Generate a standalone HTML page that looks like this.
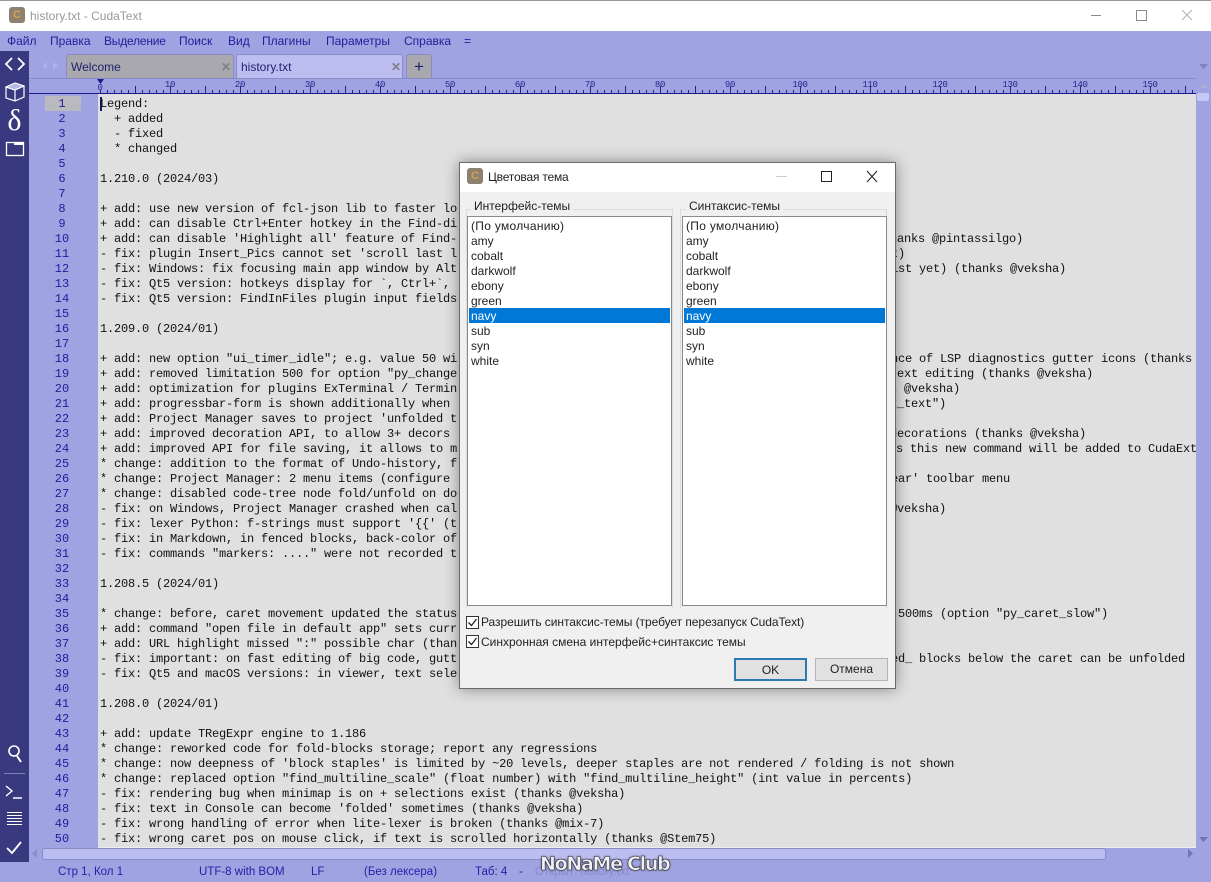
<!DOCTYPE html>
<html><head><meta charset="utf-8"><title>history.txt - CudaText</title>
<style>
html,body{margin:0;padding:0;width:1211px;height:882px;overflow:hidden;background:#a0a3e1}
*{box-sizing:border-box}
body{position:relative;font-family:"Liberation Sans","Noto Sans CJK SC",sans-serif;font-size:12px}
.a{position:absolute}
#title{left:0;top:0;width:1211px;height:31px;background:#fff;border-top:1px solid #999}
#menu span{position:absolute;top:34px;color:#20209a;font-size:12px;line-height:14px;white-space:nowrap}
#side{left:0;top:51px;width:29px;height:811px;background:#39397f}
.tab{position:absolute;top:54px;height:25px;border:1px solid #8c8cc4;border-bottom:0;border-radius:3px 3px 0 0;font-size:12px;line-height:25px;padding-left:4px;color:#22226c}
#ed{left:98px;top:94px;width:1098px;height:753px;background:#e0e0e0}
.n{position:absolute;left:27px;width:70px;text-align:center;font:12px/15px "Liberation Mono",monospace;color:#20209a}
#code{left:0;top:1px;width:1196px;height:846px;overflow:hidden}
#code div,#code span{position:absolute;font:12px/15px "Liberation Mono",monospace;letter-spacing:-.2px;color:#111;white-space:pre}
.r{position:absolute;top:80px;font:9px/10px "Liberation Mono",monospace;color:#24248c;letter-spacing:-.3px;transform:translateX(-50%)}
#dlg{left:459px;top:162px;width:437px;height:527px;background:#f0f0f0;border:1px solid #6a6a6a;box-shadow:0 0 14px rgba(0,0,0,.4)}
.d{position:absolute;white-space:nowrap;font-size:12px;line-height:15px;color:#222}
.list{position:absolute;top:216px;height:390px;background:#fff;border:1px solid #8a8a8a}
.grp{position:absolute;top:209px;height:400px;border:1px solid #dcdcdc;border-bottom:0}
.sel{position:absolute;top:308px;height:15px;background:#0078d7}
.cb{position:absolute;left:466px;width:13px;height:13px;border:1px solid #333;background:#fff}
.btn{position:absolute;top:658px;height:23px;background:#e1e1e1;text-align:center;font-size:12px;line-height:22px;color:#222}
#st span{position:absolute;top:865px;font-size:11.500px;line-height:14px;color:#2222a8;white-space:nowrap}
</style></head><body>

<div class="a" id="title"></div>
<div class="a" style="left:9px;top:7px;width:16px;height:16px;border-radius:3px;background:#8d8272;color:#d8a24a;font:bold 11px/16px 'Liberation Sans',sans-serif;text-align:center">C</div>
<div class="a" style="left:30px;top:9px;font-size:12px;line-height:14px;color:#9a9a9a">history.txt - CudaText</div>
<svg class="a" style="left:1080px;top:5px" width="125" height="22" fill="none" stroke="#8a8a8a" stroke-width="1"><line x1="11" y1="10.500" x2="21" y2="10.500"/><rect x="56.500" y="5.500" width="10" height="10"/><path d="M102 5l10 10M112 5l-10 10" stroke="#b0b0b0"/></svg>

<div id="menu">
<span style="left:7px">Файл</span><span style="left:50px">Правка</span><span style="left:104px;letter-spacing:-.2px">Выделение</span><span style="left:179px">Поиск</span><span style="left:228px">Вид</span><span style="left:262px">Плагины</span><span style="left:326px">Параметры</span><span style="left:404px">Справка</span><span style="left:464px">=</span>
</div>

<div class="a" id="side"></div>
<svg class="a" style="left:0;top:51px" width="29" height="811" fill="none" stroke="#fff" stroke-width="1.500">
<path d="M12 7l-6 6 6 6M18 7l6 6-6 6" stroke-width="1.800"/>
<path d="M6 36l9-4 9 3v11l-9 4-9-3zM6 36l9 3 9-4M15 39v11" stroke-width="1.200"/>
<path d="M6 36l9-4 9 3-9 4z" fill="#b8b8e8" stroke-width="1"/>
<rect x="6.500" y="91.500" width="17" height="13" stroke-width="1.300"/><rect x="14" y="91" width="10" height="3" fill="#fff" stroke="none"/>
<circle cx="14" cy="700" r="5" stroke-width="1.600"/><line x1="17" y1="705" x2="21" y2="711" stroke-width="2"/>
<line x1="4" y1="722.500" x2="25" y2="722.500" stroke="#8080b8" stroke-width="1"/>
<path d="M6 735l6 5-6 5M13 747h9" stroke-width="1.400"/>
<path d="M7 761.500h15M7 764.500h15M7 767.500h15M7 770.500h15M7 773.500h15" stroke-width="1"/>
<path d="M7 797l5 5 9-11" stroke-width="1.800"/>
</svg>
<div class="a" style="left:0;top:104px;width:29px;text-align:center;color:#fff;font:30px/34px 'Liberation Serif',serif">δ</div>

<svg class="a" style="left:38px;top:59px" width="24" height="14" fill="#aeb0e6"><path d="M9 3v8l-5-4zM15 3v8l5-4z"/></svg>
<div class="tab" style="left:66px;width:168px;background:#a8a8ae">Welcome<span class="a" style="right:2px;top:0;color:#7f7f86;font-weight:bold;font-size:12px">✕</span></div>
<div class="tab" style="left:236px;width:167px;background:#bcbdf0">history.txt<span class="a" style="right:1px;top:0;color:#7f7f86;font-weight:bold;font-size:12px">✕</span></div>
<div class="tab" style="left:406px;width:26px;background:#a8a8ae;padding:0;text-align:center;font-size:17px;line-height:23px">+</div>
<div class="a" style="left:29px;top:78px;width:1167px;height:1px;background:#8c8cc4"></div>
<svg class="a" style="left:1196px;top:60px" width="15" height="50" fill="#7f82bf"><path d="M3 4h9l-4.500 5z"/><path d="M3 28h9l-4.500-5z" fill="#a9abd8"/><rect x="1" y="33" width="12" height="8" rx="2" fill="#c6c7f2"/></svg>

<!-- ruler -->
<div class="a" style="left:29px;top:93px;width:1167px;height:1px;background:#1a1a8a"></div>
<div class="a" style="left:100px;top:90px;width:1096px;height:3px;background:repeating-linear-gradient(90deg,#24248c 0 1px,transparent 1px 7px)"></div>
<div class="a" style="left:135px;top:86px;width:1061px;height:7px;background:repeating-linear-gradient(90deg,#24248c 0 1px,transparent 1px 35px)"></div>
<svg class="a" style="left:97px;top:79px" width="8" height="6" fill="#1a1a8a"><path d="M0 0h7l-3.500 5z"/></svg>
<div class="r" style="left:100px;top:83px">0</div>
<div class="r" style="left:170px">10</div><div class="r" style="left:240px">20</div><div class="r" style="left:310px">30</div><div class="r" style="left:380px">40</div><div class="r" style="left:450px">50</div><div class="r" style="left:520px">60</div><div class="r" style="left:590px">70</div><div class="r" style="left:660px">80</div><div class="r" style="left:730px">90</div><div class="r" style="left:800px">100</div><div class="r" style="left:870px">110</div><div class="r" style="left:940px">120</div><div class="r" style="left:1010px">130</div><div class="r" style="left:1080px">140</div><div class="r" style="left:1150px">150</div>

<div class="a" id="ed"></div>
<div class="a" style="left:45px;top:96px;width:36px;height:15px;background:#b9b9bf"></div>
<div class="a" style="left:100px;top:97px;width:2px;height:14px;background:#1a1a5a"></div>

<div class="a" id="gutn" style="left:0;top:1px">
<div class="n" style="top:96px">1</div><div class="n" style="top:111px">2</div><div class="n" style="top:126px">3</div><div class="n" style="top:141px">4</div><div class="n" style="top:156px">5</div><div class="n" style="top:171px">6</div><div class="n" style="top:186px">7</div><div class="n" style="top:201px">8</div><div class="n" style="top:216px">9</div><div class="n" style="top:231px">10</div><div class="n" style="top:246px">11</div><div class="n" style="top:261px">12</div><div class="n" style="top:276px">13</div><div class="n" style="top:291px">14</div><div class="n" style="top:306px">15</div><div class="n" style="top:321px">16</div><div class="n" style="top:336px">17</div><div class="n" style="top:351px">18</div><div class="n" style="top:366px">19</div><div class="n" style="top:381px">20</div><div class="n" style="top:396px">21</div><div class="n" style="top:411px">22</div><div class="n" style="top:426px">23</div><div class="n" style="top:441px">24</div><div class="n" style="top:456px">25</div><div class="n" style="top:471px">26</div><div class="n" style="top:486px">27</div><div class="n" style="top:501px">28</div><div class="n" style="top:516px">29</div><div class="n" style="top:531px">30</div><div class="n" style="top:546px">31</div><div class="n" style="top:561px">32</div><div class="n" style="top:576px">33</div><div class="n" style="top:591px">34</div><div class="n" style="top:606px">35</div><div class="n" style="top:621px">36</div><div class="n" style="top:636px">37</div><div class="n" style="top:651px">38</div><div class="n" style="top:666px">39</div><div class="n" style="top:681px">40</div><div class="n" style="top:696px">41</div><div class="n" style="top:711px">42</div><div class="n" style="top:726px">43</div><div class="n" style="top:741px">44</div><div class="n" style="top:756px">45</div><div class="n" style="top:771px">46</div><div class="n" style="top:786px">47</div><div class="n" style="top:801px">48</div><div class="n" style="top:816px">49</div><div class="n" style="top:831px">50</div>
</div>

<div class="a" id="code">
<div style="left:100px;top:96px">Legend:</div>
<div style="left:100px;top:111px">  + added</div>
<div style="left:100px;top:126px">  - fixed</div>
<div style="left:100px;top:141px">  * changed</div>
<div style="left:100px;top:171px">1.210.0 (2024/03)</div>
<div style="left:100px;top:201px">+ add: use new version of fcl-json lib to faster lo</div>
<div style="left:100px;top:216px">+ add: can disable Ctrl+Enter hotkey in the Find-di</div>
<div style="left:100px;top:231px">+ add: can disable 'Highlight all' feature of Find-</div>
<div style="left:100px;top:246px">- fix: plugin Insert_Pics cannot set 'scroll last l</div>
<div style="left:100px;top:261px">- fix: Windows: fix focusing main app window by Alt</div>
<div style="left:100px;top:276px">- fix: Qt5 version: hotkeys display for `, Ctrl+`, </div>
<div style="left:100px;top:291px">- fix: Qt5 version: FindInFiles plugin input fields</div>
<div style="left:100px;top:321px">1.209.0 (2024/01)</div>
<div style="left:100px;top:351px">+ add: new option "ui_timer_idle"; e.g. value 50 wi</div>
<div style="left:100px;top:366px">+ add: removed limitation 500 for option "py_change</div>
<div style="left:100px;top:381px">+ add: optimization for plugins ExTerminal / Termin</div>
<div style="left:100px;top:396px">+ add: progressbar-form is shown additionally when </div>
<div style="left:100px;top:411px">+ add: Project Manager saves to project 'unfolded t</div>
<div style="left:100px;top:426px">+ add: improved decoration API, to allow 3+ decors </div>
<div style="left:100px;top:441px">+ add: improved API for file saving, it allows to m</div>
<div style="left:100px;top:456px">* change: addition to the format of Undo-history, f</div>
<div style="left:100px;top:471px">* change: Project Manager: 2 menu items (configure </div>
<div style="left:100px;top:486px">* change: disabled code-tree node fold/unfold on do</div>
<div style="left:100px;top:501px">- fix: on Windows, Project Manager crashed when cal</div>
<div style="left:100px;top:516px">- fix: lexer Python: f-strings must support '{{' (t</div>
<div style="left:100px;top:531px">- fix: in Markdown, in fenced blocks, back-color of</div>
<div style="left:100px;top:546px">- fix: commands "markers: ...." were not recorded t</div>
<div style="left:100px;top:576px">1.208.5 (2024/01)</div>
<div style="left:100px;top:606px">* change: before, caret movement updated the status</div>
<div style="left:100px;top:621px">+ add: command "open file in default app" sets curr</div>
<div style="left:100px;top:636px">+ add: URL highlight missed ":" possible char (than</div>
<div style="left:100px;top:651px">- fix: important: on fast editing of big code, gutt</div>
<div style="left:100px;top:666px">- fix: Qt5 and macOS versions: in viewer, text sele</div>
<div style="left:100px;top:696px">1.208.0 (2024/01)</div>
<div style="left:100px;top:726px">+ add: update TRegExpr engine to 1.186</div>
<div style="left:100px;top:741px">* change: reworked code for fold-blocks storage; report any regressions</div>
<div style="left:100px;top:756px">* change: now deepness of 'block staples' is limited by ~20 levels, deeper staples are not rendered / folding is not shown</div>
<div style="left:100px;top:771px">* change: replaced option "find_multiline_scale" (float number) with "find_multiline_height" (int value in percents)</div>
<div style="left:100px;top:786px">- fix: rendering bug when minimap is on + selections exist (thanks @veksha)</div>
<div style="left:100px;top:801px">- fix: text in Console can become 'folded' sometimes (thanks @veksha)</div>
<div style="left:100px;top:816px">- fix: wrong handling of error when lite-lexer is broken (thanks @mix-7)</div>
<div style="left:100px;top:831px">- fix: wrong caret pos on mouse click, if text is scrolled horizontally (thanks @Stem75)</div>

<span style="left:883px;top:231px">thanks @pintassilgo)</span>
<span style="left:884px;top:246px">st)</span>
<span style="left:884px;top:261px">list yet) (thanks @veksha)</span>
<span style="left:884px;top:351px">ance of LSP diagnostics gutter icons (thanks</span>
<span style="left:890px;top:366px">text editing (thanks @veksha)</span>
<span style="left:890px;top:381px">s @veksha)</span>
<span style="left:890px;top:396px">k_text")</span>
<span style="left:890px;top:426px">decorations (thanks @veksha)</span>
<span style="left:889px;top:441px">ns this new command will be added to CudaExt</span>
<span style="left:891px;top:471px">ear' toolbar menu</span>
<span style="left:890px;top:501px">@veksha)</span>
<span style="left:891px;top:606px">-500ms (option "py_caret_slow")</span>
<span style="left:891px;top:651px">ed_ blocks below the caret can be unfolded</span>
</div>

<!-- scrollbars -->
<div class="a" style="left:98px;top:847px;width:1098px;height:1px;background:#ececf4"></div>
<div class="a" style="left:42px;top:848px;width:1064px;height:12px;background:#bcbdf0;border:1px solid #8a8cc8;border-radius:3px"></div>
<svg class="a" style="left:30px;top:848px" width="10" height="12" fill="#8c8ec8"><path d="M7 1v9l-5-4.500z"/></svg>
<svg class="a" style="left:1186px;top:848px" width="10" height="12" fill="#7275b5"><path d="M2 1v9l5-4.500z"/></svg>
<svg class="a" style="left:1198px;top:836px" width="12" height="8" fill="#7275b5"><path d="M1 1h9l-4.500 5z"/></svg>

<!-- status -->
<div id="st">
<span style="left:58px">Стр 1, Кол 1</span>
<span style="left:199px">UTF-8 with BOM</span>
<span style="left:311px">LF</span>
<span style="left:364px">(Без лексера)</span>
<span style="left:475px">Таб: 4</span>
<span style="left:519px">-</span>
<span style="left:535px;color:#8a8cc6">Открыт: history.txt</span>
</div>
<div class="a" style="left:540px;top:852px;font:bold 19px/24px 'DejaVu Sans',sans-serif;letter-spacing:-1.300px;color:#f0f0fa;-webkit-text-stroke:.6px #333;white-space:nowrap;text-shadow:0 0 2px #333">NoNaMe Club</div>

<!-- dialog -->
<div class="a" id="dlg"></div>
<div class="a" style="left:460px;top:163px;width:435px;height:29px;background:#fff"></div>
<div class="a" style="left:467px;top:168px;width:16px;height:16px;border-radius:3px;background:#8d8272;color:#d8a24a;font:bold 11px/16px 'Liberation Sans',sans-serif;text-align:center">C</div>
<div class="d" style="left:488px;top:170px;letter-spacing:-.2px">Цветовая тема</div>
<svg class="a" style="left:770px;top:165px" width="120" height="24" fill="none" stroke="#222" stroke-width="1"><line x1="6" y1="11.500" x2="17" y2="11.500" stroke="#ccc"/><rect x="51.500" y="6.500" width="10" height="10"/><path d="M97 6l10 11M107 6l-10 11"/></svg>

<div class="grp" style="left:466px;width:207px"></div>
<div class="grp" style="left:680px;width:207px"></div>
<div class="d" style="left:471px;top:199px;background:#f0f0f0;padding:0 3px">Интерфейс-темы</div>
<div class="d" style="left:686px;top:199px;background:#f0f0f0;padding:0 3px">Синтаксис-темы</div>
<div class="list" style="left:467px;width:205px"></div>
<div class="list" style="left:682px;width:205px"></div>
<div class="sel" style="left:469px;width:201px"></div>
<div class="sel" style="left:684px;width:201px"></div>

<div class="d" style="left:471px;top:219px;letter-spacing:.3px">(По умолчанию)</div>
<div class="d" style="left:471px;top:234px">amy</div>
<div class="d" style="left:471px;top:249px">cobalt</div>
<div class="d" style="left:471px;top:264px">darkwolf</div>
<div class="d" style="left:471px;top:279px">ebony</div>
<div class="d" style="left:471px;top:294px">green</div>
<div class="d" style="left:471px;top:309px;color:#fff">navy</div>
<div class="d" style="left:471px;top:324px">sub</div>
<div class="d" style="left:471px;top:339px">syn</div>
<div class="d" style="left:471px;top:354px">white</div>

<div class="d" style="left:686px;top:219px;letter-spacing:.3px">(По умолчанию)</div>
<div class="d" style="left:686px;top:234px">amy</div>
<div class="d" style="left:686px;top:249px">cobalt</div>
<div class="d" style="left:686px;top:264px">darkwolf</div>
<div class="d" style="left:686px;top:279px">ebony</div>
<div class="d" style="left:686px;top:294px">green</div>
<div class="d" style="left:686px;top:309px;color:#fff">navy</div>
<div class="d" style="left:686px;top:324px">sub</div>
<div class="d" style="left:686px;top:339px">syn</div>
<div class="d" style="left:686px;top:354px">white</div>

<div class="cb" style="top:616px"></div>
<div class="cb" style="top:635px"></div>
<svg class="a" style="left:466px;top:616px" width="13" height="32" fill="none" stroke="#222" stroke-width="1.300"><path d="M2.500 6.500l3 3 5-6.500M2.500 25.500l3 3 5-6.500"/></svg>
<div class="d" style="left:481px;top:615px;letter-spacing:-.06px">Разрешить синтаксис-темы (требует перезапуск CudaText)</div>
<div class="d" style="left:481px;top:635px">Синхронная смена интерфейс+синтаксис темы</div>
<div class="btn" style="left:734px;width:73px;border:2px solid #2b7cae;line-height:20px">OK</div>
<div class="btn" style="left:815px;width:73px;border:1px solid #b4b4b4;line-height:21px">Отмена</div>

</body></html>
